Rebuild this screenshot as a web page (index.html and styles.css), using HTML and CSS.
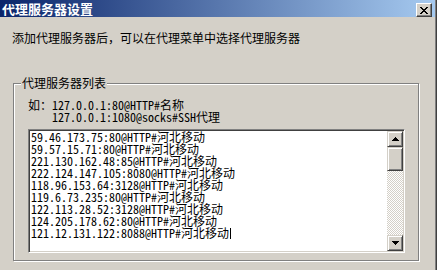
FILE: index.html
```html
<!DOCTYPE html>
<html>
<head>
<meta charset="utf-8">
<link rel="stylesheet" href="styles.css">
</head>
<body>
<div class="window">
  <div class="titlebar">
    <span class="title">代理服务器设置</span>
    <span class="close"><svg width="8" height="7" viewBox="0 0 8 7" shape-rendering="crispEdges"><path d="M0 0h2v1H0zM6 0h2v1H6zM1 1h2v1H1zM5 1h2v1H5zM2 2h4v1H2zM3 3h2v1H3zM2 4h4v1H2zM1 5h2v1H1zM5 5h2v1H5zM0 6h2v1H0zM6 6h2v1H6z" fill="#000"/></svg></span>
  </div>
  <div class="content">
    <p class="intro">添加代理服务器后，可以在代理菜单中选择代理服务器</p>
    <div class="group">
      <div class="legend">代理服务器列表</div>
      <div class="example mono">
        <div><span class="cjk">如：</span>127.0.0.1:80@HTTP#<span class="cjk">名称</span></div>
        <div class="indent">127.0.0.1:1080@socks#SSH<span class="cjk">代理</span></div>
      </div>
      <div class="textbox">
        <div class="lines mono">
          <div>59.46.173.75:80@HTTP#<span class="cjk">河北移动</span></div>
          <div>59.57.15.71:80@HTTP#<span class="cjk">河北移动</span></div>
          <div>221.130.162.48:85@HTTP#<span class="cjk">河北移动</span></div>
          <div>222.124.147.105:8080@HTTP#<span class="cjk">河北移动</span></div>
          <div>118.96.153.64:3128@HTTP#<span class="cjk">河北移动</span></div>
          <div>119.6.73.235:80@HTTP#<span class="cjk">河北移动</span></div>
          <div>122.113.28.52:3128@HTTP#<span class="cjk">河北移动</span></div>
          <div>124.205.178.62:80@HTTP#<span class="cjk">河北移动</span></div>
          <div>121.12.131.122:8088@HTTP#<span class="cjk">河北移动</span><span class="caret"></span></div>
        </div>
        <div class="scrollbar">
          <div class="sbtn"><svg width="7" height="4" viewBox="0 0 7 4" shape-rendering="crispEdges"><path d="M3 0h1v1H3zM2 1h3v1H2zM1 2h5v1H1zM0 3h7v1H0z" fill="#000"/></svg></div>
          <div class="sbtn thumb"></div>
          <div class="track"></div>
          <div class="sbtn"><svg width="7" height="4" viewBox="0 0 7 4" shape-rendering="crispEdges"><path d="M0 0h7v1H0zM1 1h5v1H1zM2 2h3v1H2zM3 3h1v1H3z" fill="#000"/></svg></div>
        </div>
      </div>
    </div>
  </div>
</div>
</body>
</html>
```
FILE: styles.css
```css
body {
  margin: 0;
  background: #d4d0c8;
}
.window {
  width: 437px;
  height: 270px;
  box-sizing: border-box;
  border-right: 1px solid #404040;
  padding-right: 1px;
  box-shadow: inset -1px 0 #808080;
  background: #d4d0c8;
  display: flex;
  flex-direction: column;
  font-family: "Noto Sans CJK SC", sans-serif;
  font-size: 12px;
  color: #000;
  overflow: hidden;
}
.titlebar {
  flex-shrink: 0;
  height: 17px;
  display: flex;
  justify-content: space-between;
  align-items: flex-start;
  padding: 0 3px 0 2px;
  background: linear-gradient(to right, #0a246a, #a6caf0);
}
.title {
  color: #fff;
  font-weight: bold;
  font-size: 13px;
  line-height: 17px;
}
.close {
  margin-top: 3px;
  width: 16px;
  height: 14px;
  box-sizing: border-box;
  display: flex;
  align-items: center;
  justify-content: center;
  background: #d4d0c8;
  border: 1px solid;
  border-color: #fff #404040 #404040 #fff;
  box-shadow: inset -1px -1px #808080;
}
.close svg, .sbtn svg {
  display: block;
}
.content {
  padding-top: 15px;
}
.intro {
  margin: 0 0 0 12px;
  line-height: 12px;
}
.group {
  margin: 39px 0 0 13px;
  width: 406px;
  height: 178px;
  box-sizing: border-box;
  border: 1px solid #808080;
  box-shadow: inset 1px 1px #fff, 1px 1px #fff;
  padding: 0 0 0 14px;
}
.legend {
  margin: -7px 0 0 -7px;
  padding: 0 1px;
  width: fit-content;
  background: #d4d0c8;
  line-height: 12px;
}
.mono {
  font-family: "Noto Sans CJK SC", sans-serif;
  font-feature-settings: "hwid" 1;
  font-size: 12px;
  line-height: 12px;
  white-space: nowrap;
}
.cjk {
  font-feature-settings: normal;
}
.example {
  margin-top: 10px;
}
.example > div, .lines > div {
  height: 12px;
}
.indent {
  padding-left: 24px;
}
.textbox {
  margin-top: 6px;
  width: 377px;
  height: 124px;
  box-sizing: border-box;
  padding: 1px;
  border: 1px solid;
  border-color: #808080 #fff #fff #808080;
  box-shadow: inset 1px 1px #404040, inset -1px -1px #d4d0c8;
  display: flex;
}
.lines {
  flex: 1;
  background: #fff;
  padding: 0 0 0 1px;
}
.caret {
  display: inline-block;
  width: 1px;
  height: 11px;
  background: #000;
  vertical-align: -1px;
  margin-left: 1px;
}
.scrollbar {
  width: 16px;
  flex-shrink: 0;
  display: flex;
  flex-direction: column;
  background: repeating-conic-gradient(#ffffff 0 25%, #d4d0c8 0 50%) 0 0 / 2px 2px;
}
.sbtn {
  width: 16px;
  height: 16px;
  flex-shrink: 0;
  box-sizing: border-box;
  display: flex;
  align-items: center;
  justify-content: center;
  background: #d4d0c8;
  border: 1px solid;
  border-color: #d4d0c8 #404040 #404040 #d4d0c8;
  box-shadow: inset 1px 1px #fff, inset -1px -1px #808080;
}
.thumb {
  height: 24px;
}
.track {
  flex: 1;
}
```
